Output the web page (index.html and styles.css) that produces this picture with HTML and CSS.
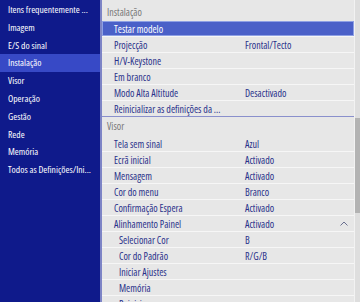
FILE: index.html
```html
<!DOCTYPE html>
<html lang="pt">
<head>
    <meta charset="UTF-8">
    <title>Configuração</title>
    <link rel="stylesheet" href="styles.css">
</head>
<body>
    <div class="app">
        <ul class="sidebar">
            <li>Itens frequentemente ...</li>
            <li>Imagem</li>
            <li>E/S do sinal</li>
            <li class="active">Instalação</li>
            <li>Visor</li>
            <li>Operação</li>
            <li>Gestão</li>
            <li>Rede</li>
            <li>Memória</li>
            <li>Todos as Definições/Ini...</li>
        </ul>

        <div class="panel">
            <div class="list">
                <div class="group-title first">Instalação</div>
                <div class="row selected"><span class="label">Testar modelo</span></div>
                <div class="row"><span class="label">Projecção</span><span class="value">Frontal/Tecto</span></div>
                <div class="row"><span class="label">H/V-Keystone</span></div>
                <div class="row"><span class="label">Em branco</span></div>
                <div class="row"><span class="label">Modo Alta Altitude</span><span class="value">Desactivado</span></div>
                <div class="row last"><span class="label">Reinicializar as definições da ...</span></div>

                <div class="group-title">Visor</div>
                <div class="row"><span class="label">Tela sem sinal</span><span class="value">Azul</span></div>
                <div class="row"><span class="label">Ecrã inicial</span><span class="value">Activado</span></div>
                <div class="row"><span class="label">Mensagem</span><span class="value">Activado</span></div>
                <div class="row"><span class="label">Cor do menu</span><span class="value">Branco</span></div>
                <div class="row"><span class="label">Confirmação Espera</span><span class="value">Activado</span></div>
                <div class="row">
                    <span class="label">Alinhamento Painel</span><span class="value">Activado</span>
                    <svg class="chevron" width="8" height="5" viewBox="0 0 8 5"><polyline points="0.5,4.5 4,1 7.5,4.5" fill="none" stroke="#6a7090" stroke-width="1"/></svg>
                </div>
                <div class="row sub"><span class="label">Selecionar Cor</span><span class="value">B</span></div>
                <div class="row sub"><span class="label">Cor do Padrão</span><span class="value">R/G/B</span></div>
                <div class="row sub"><span class="label">Iniciar Ajustes</span></div>
                <div class="row sub"><span class="label">Memória</span></div>
                <div class="row sub"><span class="label">Reiniciar</span></div>
            </div>
            <div class="scrollbar"><div class="thumb"></div></div>
        </div>
    </div>
</body>
</html>
```

FILE: styles.css
```css
body {
    margin: 0;
    font-family: "Open Sans", "Noto Sans", sans-serif;
    font-size: 10px;
    font-stretch: 87%;
    overflow: hidden;
}
.app {
    display: flex;
    width: 360px;
    height: 302px;
    overflow: hidden;
}
.sidebar {
    list-style: none;
    margin: 0;
    padding: 1px 0 0 0;
    width: 100px;
    flex-shrink: 0;
    background: #0f1a8b;
    color: #fff;
    font-size: 9.6px;
    font-stretch: 85%;
}
.sidebar li {
    height: 17.8px;
    line-height: 17.8px;
    padding-left: 8px;
    white-space: nowrap;
    overflow: hidden;
}
.sidebar li.active {
    background: #3749c6;
}
.panel {
    flex: 1;
    display: flex;
    background: #e7e7e7;
    border-left: 2px solid #7d84c6;
    overflow: hidden;
}
.list {
    flex: 1;
    padding-top: 4px;
    min-width: 0;
}
.group-title {
    height: 19px;
    line-height: 19px;
    padding-left: 5px;
    color: #777;
}
.group-title.first {
    height: 17px;
    line-height: 16px;
}
.row {
    display: flex;
    align-items: center;
    height: 15px;
    border-bottom: 1px solid #f6f6f6;
    color: #29318a;
    white-space: nowrap;
    position: relative;
}
.row.last {
    border-bottom-color: #8a90cc;
}
.row.selected {
    background: #4a60c8;
    color: #fff;
    box-shadow: inset 0 0 0 1px #8ea0e4;
}
.label {
    width: 131px;
    padding-left: 12px;
    overflow: hidden;
}
.row.sub .label {
    width: 126px;
    padding-left: 17px;
}
.value {
    flex: 1;
}
.chevron {
    position: absolute;
    right: 6px;
    top: 5px;
}
.scrollbar {
    width: 5px;
    background: #dedede;
    border-left: 1px solid #f2f2f2;
}
.thumb {
    margin-top: 118px;
    height: 95px;
    background: #b3b3b3;
}
```
